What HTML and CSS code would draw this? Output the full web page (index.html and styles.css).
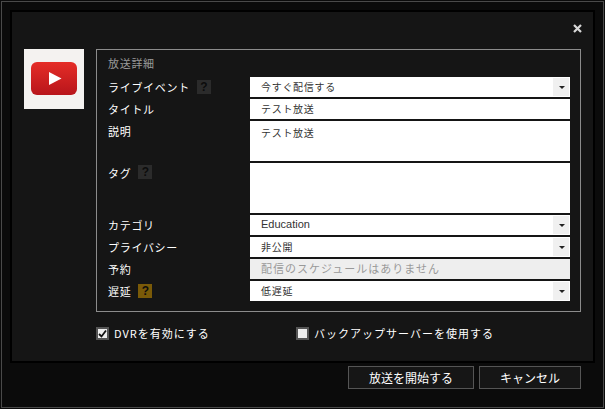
FILE: index.html
```html
<!DOCTYPE html>
<html lang="ja">
<head>
<meta charset="utf-8">
<title>放送詳細</title>
<link rel="stylesheet" href="styles.css">
</head>
<body>
<div class="window">
  <div class="panel">
    <div class="close-row">
      <svg class="close" width="9" height="9" viewBox="0 0 9 9"><path d="M1 1L8 8M8 1L1 8" stroke="#d8d8d8" stroke-width="2.2"/></svg>
    </div>
    <div class="main">
      <div class="logo">
        <svg width="46" height="33" viewBox="0 0 46 33">
          <defs><linearGradient id="yt" x1="0" y1="0" x2="0" y2="1"><stop offset="0" stop-color="#e52d27"/><stop offset="1" stop-color="#b8151b"/></linearGradient></defs>
          <rect width="46" height="33" rx="6" fill="url(#yt)"/>
          <path d="M18 10L30.500 16.500L18 23Z" fill="#fff"/>
        </svg>
      </div>
      <div class="content">
        <div class="fieldset">
          <div class="legend">放送詳細</div>
          <div class="form">
            <div class="label"><span>ライブイベント</span><span class="help">?</span></div>
            <div class="field select"><span class="val">今すぐ配信する</span><span class="arrow"></span></div>
            <div class="label"><span>タイトル</span></div>
            <div class="field"><span class="val">テスト放送</span></div>
            <div class="label top"><span>説明</span></div>
            <div class="field h40"><span class="val">テスト放送</span></div>
            <div class="label top"><span>タグ</span><span class="help">?</span></div>
            <div class="field h50"></div>
            <div class="label"><span>カテゴリ</span></div>
            <div class="field select"><span class="val latin">Education</span><span class="arrow"></span></div>
            <div class="label"><span>プライバシー</span></div>
            <div class="field select"><span class="val">非公開</span><span class="arrow"></span></div>
            <div class="label"><span>予約</span></div>
            <div class="field disabled"><span class="val">配信のスケジュールはありません</span></div>
            <div class="label"><span>遅延</span><span class="help warn">?</span></div>
            <div class="field select"><span class="val">低遅延</span><span class="arrow"></span></div>
          </div>
        </div>
        <div class="checks">
          <div class="check"><span class="box"><svg width="9" height="9" viewBox="0 0 9 9"><path d="M1 5L3.500 7.500L8 1.500" fill="none" stroke="#111" stroke-width="1.800"/></svg></span><span>DVRを有効にする</span></div>
          <div class="check"><span class="box"></span><span>バックアップサーバーを使用する</span></div>
        </div>
      </div>
    </div>
  </div>
  <div class="actions">
    <button class="btn start">放送を開始する</button>
    <button class="btn cancel">キャンセル</button>
  </div>
</div>
</body>
</html>
```
FILE: styles.css
```css
html, body {
  margin: 0;
  padding: 0;
  background: #0b0b0b;
}
body {
  box-sizing: border-box;
  width: 605px;
  height: 409px;
  padding: 1px;
  overflow: hidden;
  font-family: "Noto Sans CJK JP", "Liberation Sans", sans-serif;
  font-size: 11px;
  color: #fff;
}
.window {
  box-sizing: border-box;
  width: 603px;
  height: 407px;
  border: 1px solid #4a4a4a;
  padding: 8px 8px 0 8px;
  background: #0b0b0b;
}
.panel {
  box-sizing: border-box;
  height: 353px;
  border: 2px solid #000;
  background: #151515;
  padding: 0 12px;
}
.close-row {
  display: flex;
  justify-content: flex-end;
  height: 37px;
  padding-top: 12px;
  box-sizing: border-box;
}
.close { margin-right: -1px; }
.main { display: flex; }
.logo {
  width: 60px;
  height: 60px;
  background: #f4f2f0;
  display: flex;
  justify-content: center;
  align-items: flex-start;
  flex: none;
}
.logo svg { display: block; margin-top: 13px; }
.content { margin-left: 12px; width: 485px; }
.fieldset {
  box-sizing: border-box;
  height: 263px;
  border: 1px solid #8c8c8c;
  padding: 0 10px 0 11px;
}
.legend {
  height: 27px;
  line-height: 27px;
  color: #999;
  font-size: 11px;
  letter-spacing: 0.700px;
}
.form {
  display: grid;
  grid-template-columns: 142px 320px;
  row-gap: 2px;
}
.label {
  display: flex;
  align-items: center;
  gap: 7px;
  height: 20px;
  letter-spacing: 0.700px;
}
.label.top { align-items: flex-start; padding-top: 2px; }
.help {
  width: 14px;
  height: 14px;
  line-height: 14px;
  text-align: center;
  background: #2b2b2b;
  color: #0c0c0c;
  font-family: "Liberation Sans", sans-serif;
  font-weight: bold;
  font-size: 12px;
  letter-spacing: 0;
}
.help.warn { background: #7a5a08; }
.field {
  box-sizing: border-box;
  height: 20px;
  background: #fff;
  color: #333;
  display: flex;
  justify-content: space-between;
  padding: 0 1px 0 11px;
  font-size: 10px;
  letter-spacing: 0.700px;
  line-height: 19px;
}
.val.latin {
  font-family: "Liberation Sans", sans-serif;
  font-size: 11px;
  letter-spacing: 0;
}
.h40 { height: 40px; }
.h50 { height: 50px; }
.h40 .val { padding-top: 2px; }
.field.disabled {
  background: #eee;
  color: #999;
  font-size: 11px;
  letter-spacing: 1px;
}
.arrow {
  width: 16px;
  height: 18px;
  margin-top: 1px;
  background: #f0f0f0;
  position: relative;
}
.arrow::after {
  content: "";
  position: absolute;
  left: 6px;
  top: 8px;
  border: 3px solid transparent;
  border-top: 3px solid #222;
  border-bottom: 0;
}
.checks {
  display: flex;
  margin-top: 14px;
  font-size: 11px;
  letter-spacing: 1px;
}
.check {
  display: flex;
  align-items: center;
  gap: 5px;
  height: 14px;
  width: 200px;
}
.box {
  box-sizing: border-box;
  width: 13px;
  height: 13px;
  border: 2px solid #555;
  background: #eee;
  display: flex;
  align-items: center;
  justify-content: center;
}
.actions {
  display: flex;
  justify-content: flex-end;
  gap: 5px;
  margin-top: 3px;
  padding-right: 14px;
}
.btn {
  box-sizing: border-box;
  height: 23px;
  background: #161616;
  border: 1px solid #555;
  color: #fff;
  font-family: inherit;
  font-size: 12px;
  padding: 0;
}
.start { width: 126px; }
.cancel { width: 102px; }
```
